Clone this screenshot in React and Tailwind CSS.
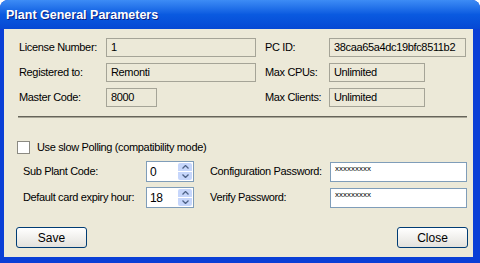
import React from "react";

const font = { fontFamily: '"Liberation Sans", Arial, sans-serif' };

function RO({ w, children }) {
  return (
    <div
      className={`h-[19px] shrink-0 border border-[#a5a497] bg-[#ece9d8] pl-[4px] flex items-center text-black overflow-hidden ${w}`}
    >
      {children}
    </div>
  );
}

function Spinner({ value }) {
  return (
    <div className="w-[48px] h-[21px] shrink-0 border border-[#7f9db9] bg-white flex items-center">
      <span className="flex-1 pl-[3px] text-[12px]">{value}</span>
      <div className="w-[14px] h-[17px] mr-[1px] flex flex-col gap-[1px]">
        <div className="flex-1 bg-[#c6d6fb] rounded-t-[2px] flex items-center justify-center">
          <svg width="7" height="4" viewBox="0 0 7 4">
            <path d="M0.5 3.5 L3.5 0.5 L6.5 3.5" fill="none" stroke="#4d6185" strokeWidth="1.3" />
          </svg>
        </div>
        <div className="flex-1 bg-[#c6d6fb] rounded-b-[2px] flex items-center justify-center">
          <svg width="7" height="4" viewBox="0 0 7 4">
            <path d="M0.5 0.5 L3.5 3.5 L6.5 0.5" fill="none" stroke="#4d6185" strokeWidth="1.3" />
          </svg>
        </div>
      </div>
    </div>
  );
}

function Pw() {
  return (
    <div className="w-[137px] h-[20px] shrink-0 border border-[#7f9db9] bg-white pl-[4px] flex items-start pt-[1px]">
      <span className="text-[8px] tracking-[0px] leading-[10px]">xxxxxxxxx</span>
    </div>
  );
}

function Btn({ children }) {
  return (
    <div className="w-[71px] h-[21px] rounded-[3px] border border-[#003c74] bg-gradient-to-b from-[#ffffff] to-[#e3e2dc] flex items-center justify-center text-[12px] tracking-[0px]">
      {children}
    </div>
  );
}

export default function App() {
  return (
    <div style={font} className="w-[480px] h-[263px] bg-[#0a3fd6] rounded-t-[8px] flex flex-col overflow-hidden text-black whitespace-nowrap">
      <div className="h-[29px] shrink-0 bg-gradient-to-b from-[#3d8cf5] via-[#0a5ae0] to-[#0648d4] flex items-center pl-[6px] pt-[1px]">
        <span className="text-white font-bold text-[12.5px] [text-shadow:1px_1px_0_#0a1e80]">
          Plant General Parameters
        </span>
      </div>
      <div className="flex-1 ml-[4px] mr-[7px] mb-[6px] bg-[#ece9d8] flex flex-col pl-[15px] pt-[9px] text-[11px] tracking-[-0.35px]">
        <div className="flex flex-col gap-[6px]">
          <div className="flex items-center h-[19px]">
            <span className="w-[87px] shrink-0">License Number:</span>
            <RO w="w-[150px]">1</RO>
            <span className="w-[64px] ml-[9px] shrink-0">PC ID:</span>
            <RO w="w-[137px]">38caa65a4dc19bfc8511b2</RO>
          </div>
          <div className="flex items-center h-[19px]">
            <span className="w-[87px] shrink-0">Registered to:</span>
            <RO w="w-[150px]">Remonti</RO>
            <span className="w-[64px] ml-[9px] shrink-0">Max CPUs:</span>
            <RO w="w-[96px]">Unlimited</RO>
          </div>
          <div className="flex items-center h-[19px]">
            <span className="w-[87px] shrink-0">Master Code:</span>
            <RO w="w-[51px]">8000</RO>
            <span className="w-[64px] ml-[108px] shrink-0">Max Clients:</span>
            <RO w="w-[96px]">Unlimited</RO>
          </div>
        </div>
        <div className="mt-[9px] ml-[-1px] w-[449px] h-[2px] bg-[#66645a] border-b border-[#a9a797]" />
        <div className="mt-[23px] flex items-center ml-[-2px] h-[13px]">
          <div className="w-[13px] h-[13px] shrink-0 border border-[#8b8a82] bg-white" />
          <span className="ml-[7px]">Use slow Polling (compatibility mode)</span>
        </div>
        <div className="mt-[7px] flex items-center pl-[4px] h-[21px]">
          <span className="w-[123px] shrink-0">Sub Plant Code:</span>
          <Spinner value="0" />
          <span className="w-[120px] ml-[16px] shrink-0">Configuration Password:</span>
          <Pw />
        </div>
        <div className="mt-[5px] flex items-center pl-[4px] h-[21px]">
          <span className="w-[123px] shrink-0">Default card expiry hour:</span>
          <Spinner value="18" />
          <span className="w-[120px] ml-[16px] shrink-0">Verify Password:</span>
          <Pw />
        </div>
        <div className="mt-[19px] flex items-center ml-[-3px] w-[452px] justify-between">
          <Btn>Save</Btn>
          <Btn>Close</Btn>
        </div>
      </div>
    </div>
  );
}
